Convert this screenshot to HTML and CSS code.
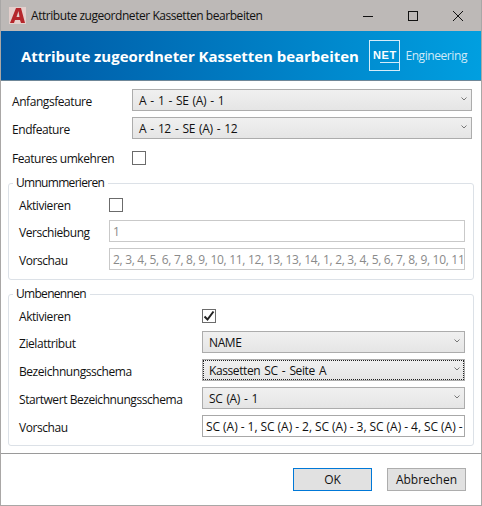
FILE: index.html
```html
<!DOCTYPE html>
<html lang="de">
<head>
  <meta charset="UTF-8">
  <title>Attribute zugeordneter Kassetten bearbeiten</title>
  <link rel="stylesheet" href="styles.css">
</head>
<body>
  <div class="fenster">
    <div class="titelleiste">
      <svg class="app-icon" width="17" height="17" viewBox="0 0 17 17">
        <rect width="17" height="17" fill="#e4cfcc"/>
        <polygon points="1,16 7,1 12,1 16,16 12,16 11,13 6,13 5,16" fill="#b5262b"/>
        <polygon points="7.5,10 9.5,4 10.5,10" fill="#e4cfcc"/>
      </svg>
      <span class="titel">Attribute zugeordneter Kassetten bearbeiten</span>
      <div class="fenster-knoepfe">
        <svg width="12" height="12" viewBox="0 0 12 12"><path d="M1 6.5h10" stroke="#111" fill="none"/></svg>
        <svg width="12" height="12" viewBox="0 0 12 12"><rect x="1.5" y="1.5" width="9" height="9" stroke="#111" fill="none"/></svg>
        <svg width="12" height="12" viewBox="0 0 12 12"><path d="M1 1l10 10M11 1L1 11" stroke="#111" fill="none"/></svg>
      </div>
    </div>

    <div class="kopf">
      <h1>Attribute zugeordneter Kassetten bearbeiten</h1>
      <div class="logo">
        <div class="logo-box">NET<div class="logo-strich"></div></div>
        <span>Engineering</span>
      </div>
    </div>

    <div class="inhalt">
      <div class="zeile oben">
        <label>Anfangsfeature</label>
        <div class="auswahl">A - 1 - SE (A) - 1<svg class="pfeil" width="6" height="4" viewBox="0 0 6 4"><path d="M.5 .5L3 3 5.500 .5" stroke="#777" fill="none"/></svg></div>
      </div>
      <div class="zeile oben">
        <label>Endfeature</label>
        <div class="auswahl">A - 12 - SE (A) - 12<svg class="pfeil" width="6" height="4" viewBox="0 0 6 4"><path d="M.5 .5L3 3 5.500 .5" stroke="#777" fill="none"/></svg></div>
      </div>
      <div class="zeile oben check-zeile">
        <label>Features umkehren</label>
        <div class="haken"></div>
      </div>

      <fieldset class="gruppe umnummerieren">
        <legend>Umnummerieren</legend>
        <div class="zeile check-zeile">
          <label>Aktivieren</label>
          <div class="haken"></div>
        </div>
        <div class="zeile">
          <label>Verschiebung</label>
          <div class="feld grau">1</div>
        </div>
        <div class="zeile">
          <label>Vorschau</label>
          <div class="feld grau">2, 3, 4, 5, 6, 7, 8, 9, 10, 11, 12, 13, 13, 14, 1, 2, 3, 4, 5, 6, 7, 8, 9, 10, 11, 12, 13</div>
        </div>
      </fieldset>

      <fieldset class="gruppe umbenennen">
        <legend>Umbenennen</legend>
        <div class="zeile check-zeile">
          <label>Aktivieren</label>
          <div class="haken">
            <svg width="12" height="12" viewBox="0 0 12 12"><path d="M1.500 6.500l3 3 6-8" stroke="#222" stroke-width="2" fill="none"/></svg>
          </div>
        </div>
        <div class="zeile">
          <label>Zielattribut</label>
          <div class="auswahl">NAME<svg class="pfeil" width="6" height="4" viewBox="0 0 6 4"><path d="M.5 .5L3 3 5.500 .5" stroke="#777" fill="none"/></svg></div>
        </div>
        <div class="zeile">
          <label>Bezeichnungsschema</label>
          <div class="auswahl fokus">Kassetten SC - Seite A<svg class="pfeil" width="6" height="4" viewBox="0 0 6 4"><path d="M.5 .5L3 3 5.500 .5" stroke="#777" fill="none"/></svg></div>
        </div>
        <div class="zeile">
          <label>Startwert Bezeichnungsschema</label>
          <div class="auswahl">SC (A) - 1<svg class="pfeil" width="6" height="4" viewBox="0 0 6 4"><path d="M.5 .5L3 3 5.500 .5" stroke="#777" fill="none"/></svg></div>
        </div>
        <div class="zeile">
          <label>Vorschau</label>
          <div class="feld schwarz">SC (A) - 1, SC (A) - 2, SC (A) - 3, SC (A) - 4, SC (A) - 5, SC (A) - 6</div>
        </div>
      </fieldset>
    </div>

    <div class="fuss">
      <button class="knopf standard">OK</button>
      <button class="knopf">Abbrechen</button>
    </div>
  </div>
</body>
</html>
```

FILE: styles.css
```css
* {
  box-sizing: border-box;
}
html, body {
  margin: 0;
  height: 100%;
}
body {
  font-family: "Open Sans", sans-serif;
  font-size: 12px;
  color: #111;
  background: #fff;
}
.fenster {
  display: flex;
  flex-direction: column;
  height: 506px;
  border: 1px solid #a9a7a6;
  border-top: none;
  overflow: hidden;
}
/* Titelleiste */
.titelleiste {
  display: flex;
  align-items: center;
  height: 31px;
  flex: none;
  padding-left: 8px;
  background: #bdb9b7;
}
.app-icon {
  margin-right: 5px;
}
.titel {
  flex: 1;
  letter-spacing: -0.45px;
}
.fenster-knoepfe {
  display: flex;
  gap: 33px;
  padding-right: 17px;
}
/* Kopfbereich */
.kopf {
  display: flex;
  align-items: center;
  justify-content: space-between;
  flex: none;
  height: 50px;
  padding: 0 14px 0 20px;
  background: linear-gradient(to right, #0057a3, #009fe0);
  border-bottom: 1px solid #6f8798;
  color: #fff;
}
.kopf h1 {
  margin: 0;
  font-size: 15px;
  font-weight: 700;
  letter-spacing: -0.03px;
  white-space: nowrap;
}
.logo {
  display: flex;
  align-items: center;
  gap: 5px;
  font-size: 12px;
}
.logo span {
  color: #cfeaf8;
  letter-spacing: -0.42px;
}
.logo-box {
  width: 31px;
  height: 31px;
  padding-top: 8px;
  border: 1px solid #d5ecf9;
  font-family: "Liberation Sans", sans-serif;
  font-weight: 700;
  font-size: 11px;
  letter-spacing: 0.6px;
  text-align: center;
  line-height: 12px;
}
.logo-strich {
  width: 19px;
  height: 1px;
  margin: 1px 0 0 10px;
  background: #d5ecf9;
}
/* Formular */
.inhalt {
  flex: 1;
  padding: 8px 7px 0;
  border-bottom: 1px solid #9a9a9a;
}
.zeile {
  display: grid;
  align-items: center;
  height: 22px;
  margin-bottom: 6px;
}
.oben {
  grid-template-columns: 120px 340px;
  padding-left: 4px;
}
.oben.check-zeile {
  margin-top: 9px;
  height: 16px;
  margin-bottom: 0;
}
.check-zeile {
  height: 16px;
}
label {
  padding-top: 2px;
  white-space: nowrap;
  letter-spacing: -0.44px;
}
.auswahl {
  position: relative;
  height: 22px;
  line-height: 21px;
  padding-left: 6px;
  border: 1px solid #acacac;
  background: linear-gradient(#f0f0f0, #e5e5e5);
  letter-spacing: -0.4px;
  word-spacing: 1.4px;
}
.auswahl .pfeil {
  position: absolute;
  right: 4px;
  top: 7px;
}
.fokus {
  outline: 1px dotted #222;
  outline-offset: -2px;
}
.feld {
  height: 22px;
  line-height: 21px;
  padding-left: 3px;
  border: 1px solid #b8b8b8;
  overflow: hidden;
  white-space: nowrap;
}
.grau {
  border-color: #c9c9c9;
  color: #8a8a8a;
  letter-spacing: -0.3px;
}
.schwarz {
  border-color: #a8a8a8;
  letter-spacing: -0.05px;
}
.haken {
  display: flex;
  align-items: center;
  justify-content: center;
  width: 14px;
  height: 14px;
  border: 1px solid #6b6b6b;
  background: #fff;
}
/* Gruppen */
.gruppe {
  margin: 0;
  padding: 4px 7px 0 10px;
  border: 1px solid #dce1e7;
  border-radius: 3px;
}
.gruppe legend {
  padding: 0 4px 0 3px;
  margin-left: -6px;
  letter-spacing: -0.7px;
  line-height: 14px;
}
.umnummerieren {
  height: 104px;
  margin-top: 12px;
  margin-bottom: 7px;
}
.umnummerieren .zeile {
  grid-template-columns: 90px 356px;
}
.umnummerieren .check-zeile {
  margin-top: 1px;
  margin-bottom: 9px;
}
.umbenennen {
  height: 159px;
}
.umbenennen .zeile {
  grid-template-columns: 183px 263px;
}
.umbenennen .check-zeile {
  margin-top: 1px;
  margin-bottom: 9px;
}
/* Fuss */
.fuss {
  display: flex;
  justify-content: flex-end;
  gap: 15px;
  flex: none;
  height: 51px;
  padding: 14px 15px 0 0;
}
.knopf {
  width: 79px;
  height: 23px;
  padding: 0;
  font: inherit;
  color: #111;
  background: #e1e1e1;
  border: 1px solid #adadad;
}
.standard {
  border-color: #0078d7;
}
```
